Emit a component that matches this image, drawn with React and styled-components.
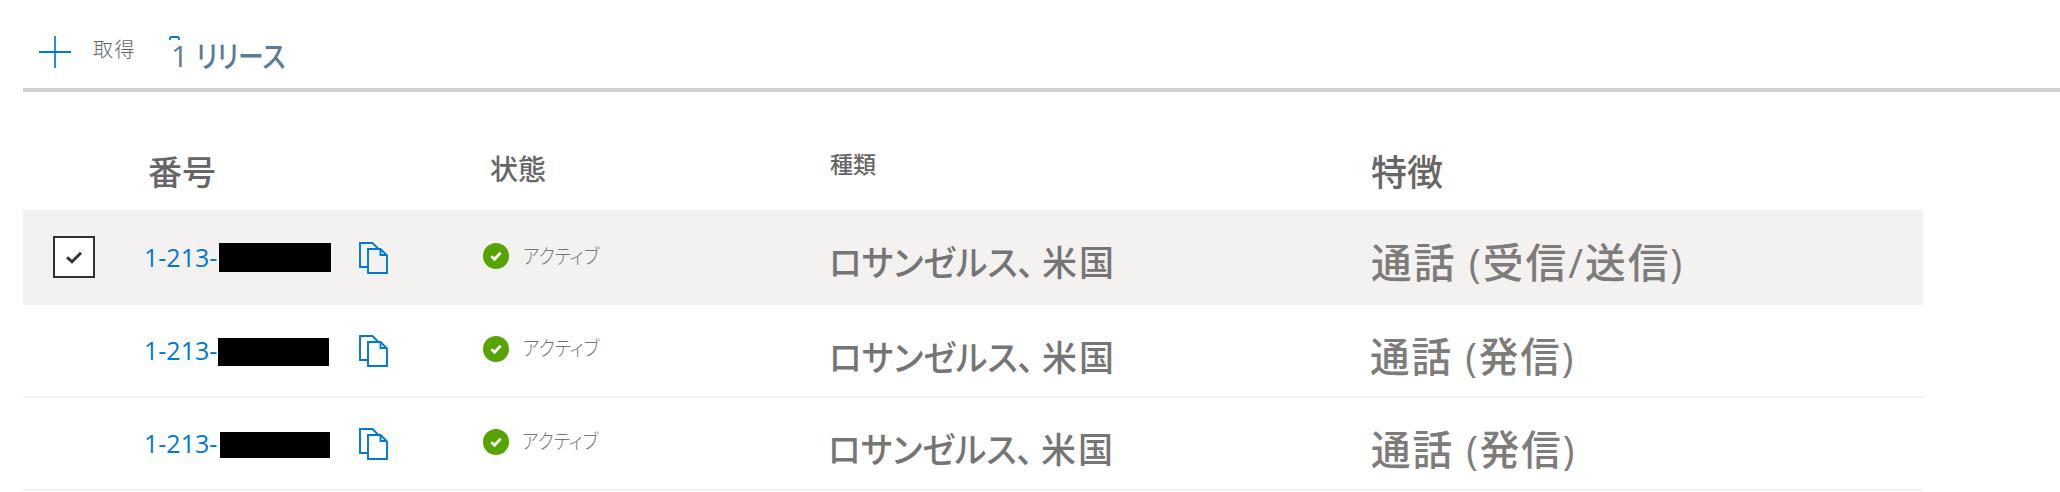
import React from 'react';
import styled, { createGlobalStyle } from 'styled-components';

const Global = createGlobalStyle`
  body { margin: 0; background: #fff; overflow: hidden; }
  * { box-sizing: border-box; }
`;

const Page = styled.main`
  width: 2060px;
  height: 492px;
  padding-left: 23px;
  overflow: hidden;
  font-family: "Noto Sans CJK JP", sans-serif;
`;

const Toolbar = styled.header`
  display: flex;
  align-items: flex-start;
  height: 92px;
  border-bottom: 4px solid #d0d0d0;
`;

const ToolButton = styled.button`
  display: flex;
  align-items: flex-start;
  padding: 36px 0 0;
  margin-left: ${(p) => p.$gap}px;
  border: 0;
  background: none;
  font: inherit;
`;

const Text = styled.span`
  display: block;
  flex: none;
  white-space: pre;
  line-height: 1;
  font-family: ${(p) => (p.$latin ? '"Open Sans", "Noto Sans CJK JP", sans-serif' : 'inherit')};
  font-size: ${(p) => p.$size}px;
  font-weight: ${(p) => p.$weight || 400};
  color: ${(p) => p.$color || '#757575'};
  letter-spacing: ${(p) => p.$track || 0}px;
  font-feature-settings: ${(p) => (p.$tight ? '"palt"' : 'normal')};
  margin: ${(p) => p.$top || 0}px 0 0 ${(p) => p.$left || 0}px;
  transform: scaleX(${(p) => p.$stretch || 1});
  transform-origin: left;
`;

const Table = styled.section`
  width: 1900px;
`;

const Row = styled.div`
  display: grid;
  grid-template-columns: 123px 337px 347px 541px 1fr;
  align-items: start;
  height: ${(p) => p.$height}px;
  background: ${(p) => (p.$selected ? '#f3f2f1' : '#fff')};
  border-bottom: ${(p) => (p.$line ? '2px solid #f2f2f2' : '0')};
`;

const Cell = styled.div`
  display: flex;
  align-items: flex-start;
`;

const Checkbox = styled.span`
  display: grid;
  place-items: center;
  width: 42px;
  height: 42px;
  margin: 26px 0 0 30px;
  border: 2px solid #323130;
  background: #fff;
`;

const PhoneLink = styled.a`
  display: block;
  width: ${(p) => p.$width}px;
  margin-top: ${(p) => p.$top}px;
  font: 25px/36px "Open Sans", sans-serif;
  text-indent: -2px;
  white-space: nowrap;
  color: #0078d4;
`;

const Redaction = styled.span`
  width: ${(p) => p.$w}px;
  height: ${(p) => p.$h}px;
  margin-top: ${(p) => p.$top}px;
  background: #000;
`;

const IconSlot = styled.span`
  display: flex;
  margin: ${(p) => p.$top || 0}px 0 0 ${(p) => p.$left || 0}px;
  svg { display: block; }
`;

const PlusIcon = () => (
  <svg width="32" height="32" viewBox="0 0 32 32" fill="none">
    <path d="M16 0v32" stroke="#2b8cda" strokeWidth="2" />
    <path d="M0 16h32" stroke="#0078d4" strokeWidth="2" />
  </svg>
);

const ReleaseIcon = () => (
  <svg width="11" height="5" viewBox="0 0 11 5" fill="none">
    <path d="M1 4V2.6Q1 1 2.6 1H8.4Q10 1 10 2.6V4" stroke="#0078d4" strokeWidth="1.8" />
  </svg>
);

const CopyIcon = () => (
  <svg width="29" height="32" viewBox="0 0 29 32" fill="none" stroke="#0078d4" strokeWidth="1.9">
    <path d="M9 25H1V1H13.5L19 6.5" />
    <path d="M9 7H21.5L28 13.5V31H9Z" />
    <path d="M21.5 7V13H28" />
  </svg>
);

const CheckIcon = () => (
  <svg width="18" height="14" viewBox="0 0 18 14" fill="none">
    <path d="M2 7.2L7 11.8L16 2.8" stroke="#323130" strokeWidth="2.9" />
  </svg>
);

const ActiveIcon = () => (
  <svg width="26" height="26" viewBox="0 0 26 26" fill="none">
    <circle cx="13" cy="13" r="13" fill="#57a300" />
    <path d="M8.3 13.3L11.5 16.2L17.7 9.8" stroke="#fff" strokeWidth="2.8" />
  </svg>
);

const numbers = [
  { id: 1, selected: true, height: 95, phoneTop: 29, box: { left: 73, w: 112, h: 29, top: 33 }, copyGap: 28, copyTop: 32, dot: 33, active: [14, 36], type: [0, 33], use: '通話 (受信/送信)', useAt: [0, 32], useStretch: 0.992 },
  { id: 2, height: 93, line: true, phoneTop: 27, box: { left: 72, w: 111, h: 28, top: 33 }, copyGap: 30, copyTop: 30, dot: 31, active: [14, 33], type: [0, 33], use: '通話 (発信)', useAt: [-1, 31], useStretch: 0.965 },
  { id: 3, height: 93, line: true, phoneTop: 27, box: { left: 74, w: 110, h: 26, top: 34 }, copyGap: 29, copyTop: 30, dot: 31, active: [13, 33], type: [-1, 32], use: '通話 (発信)', useAt: [0, 31], useStretch: 0.965 },
];

const NumberRow = ({ item }) => (
  <Row $height={item.height} $selected={item.selected} $line={item.line}>
    <Cell>{item.selected && <Checkbox><CheckIcon /></Checkbox>}</Cell>
    <Cell>
      <PhoneLink $width={item.box.left} $top={item.phoneTop}>1-213-</PhoneLink>
      <Redaction $w={item.box.w} $h={item.box.h} $top={item.box.top} />
      <IconSlot $top={item.copyTop} $left={item.copyGap}><CopyIcon /></IconSlot>
    </Cell>
    <Cell>
      <IconSlot $top={item.dot}><ActiveIcon /></IconSlot>
      <Text $size={20} $weight={300} $tight $stretch={0.89} $left={item.active[0]} $top={item.active[1]}>アクティブ</Text>
    </Cell>
    <Cell>
      <Text $size={35} $tight $stretch={0.96} $weight={500} $left={item.type[0] - 1} $top={item.type[1]}>ロサンゼルス、</Text>
      <Text $size={35} $weight={500} $track={2} $left={-1} $top={item.type[1]}>米国</Text>
    </Cell>
    <Cell>
      <Text $latin $size={41} $weight={500} $color="#7d7c7b" $track={2} $stretch={item.useStretch} $left={item.useAt[0]} $top={item.useAt[1]}>{item.use}</Text>
    </Cell>
  </Row>
);

export default function App() {
  return (
    <Page>
      <Global />
      <Toolbar>
        <ToolButton $gap={16}>
          <PlusIcon />
          <Text $size={20} $weight={300} $color="#666" $track={1.5} $left={22} $top={3}>取得</Text>
        </ToolButton>
        <ToolButton $gap={33}>
          <ReleaseIcon />
          <Text $latin $size={30} $weight={500} $color="#5c7b94" $left={-9} $top={5}>1</Text>
          <Text $size={30} $weight={500} $color="#5c7b94" $tight $stretch={0.86} $left={8} $top={3}>リリース</Text>
        </ToolButton>
      </Toolbar>
      <Table>
        <Row $height={118}>
          <Cell />
          <Cell><Text $size={34} $weight={500} $color="#666" $left={2} $top={62}>番号</Text></Cell>
          <Cell><Text $size={28} $weight={500} $color="#666" $left={7} $top={62}>状態</Text></Cell>
          <Cell><Text $size={23} $weight={500} $color="#666" $left={0} $top={60}>種類</Text></Cell>
          <Cell><Text $size={36} $weight={500} $color="#666" $left={0} $top={60}>特徴</Text></Cell>
        </Row>
        {numbers.map((item) => <NumberRow key={item.id} item={item} />)}
      </Table>
    </Page>
  );
}
